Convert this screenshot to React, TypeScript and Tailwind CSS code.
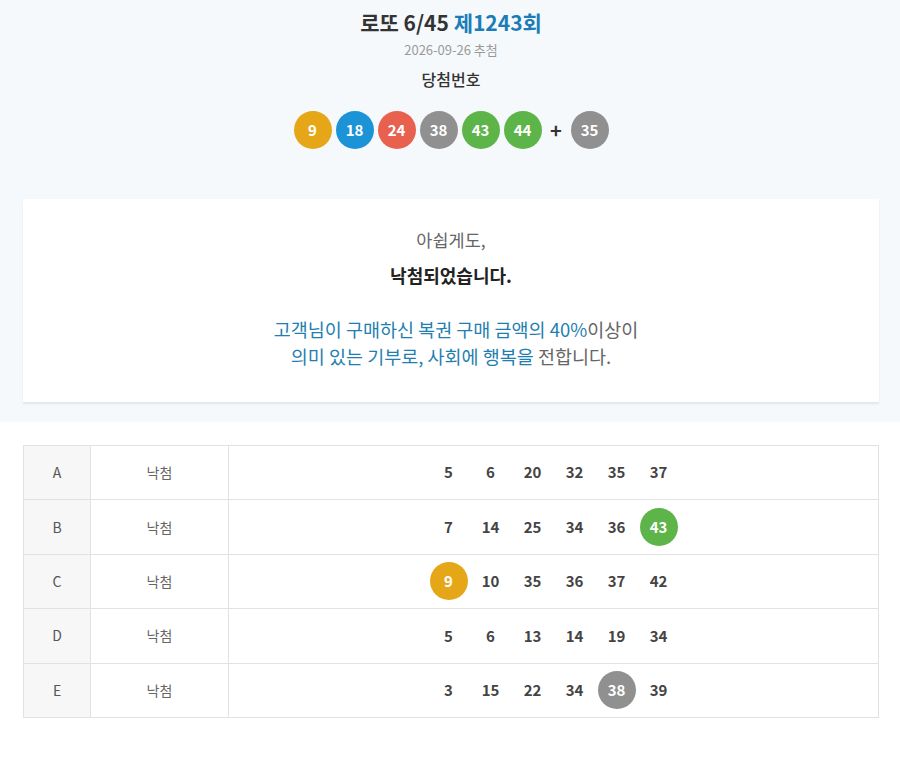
const balls = [
  { n: 9, c: 'bg-[#e5a718]' },
  { n: 18, c: 'bg-[#1d93d7]' },
  { n: 24, c: 'bg-[#e8614f]' },
  { n: 38, c: 'bg-[#909090]' },
  { n: 43, c: 'bg-[#5db449]' },
  { n: 44, c: 'bg-[#5db449]' },
]
const bonus = 35

const ballColor = (n: number) => {
  if (n <= 10) return 'bg-[#e5a718]'
  if (n <= 20) return 'bg-[#1d93d7]'
  if (n <= 30) return 'bg-[#e8614f]'
  if (n <= 40) return 'bg-[#909090]'
  return 'bg-[#5db449]'
}

const winning = balls.map(b => b.n)

const games = [
  { id: 'A', nums: [5, 6, 20, 32, 35, 37] },
  { id: 'B', nums: [7, 14, 25, 34, 36, 43] },
  { id: 'C', nums: [9, 10, 35, 36, 37, 42] },
  { id: 'D', nums: [5, 6, 13, 14, 19, 34] },
  { id: 'E', nums: [3, 15, 22, 34, 38, 39] },
]

function Ball({ n, color }: { n: number; color: string }) {
  return (
    <span className={`flex h-[38px] w-[38px] items-center justify-center rounded-full text-[15px] font-bold text-white ${color}`}>
      {n}
    </span>
  )
}

export default function App() {
  return (
    <div className="min-h-[759px] bg-white font-['Noto_Sans_CJK_KR','Noto_Sans',sans-serif]">
      <section className="bg-[#f6f9fc] pb-[20px] pl-[23px] pr-[21px] pt-[7px]">
        <h1 className="text-center text-[21px] font-bold leading-[30px] text-[#333]">
          로또 6/45 <span className="text-[#1a7db8]">제1243회</span>
        </h1>
        <p className="mt-[4px] text-center text-[13px] leading-[18px] text-[#999]">2026-09-26 추첨</p>
        <p className="mt-[8px] text-center text-[16px] font-medium leading-[24px] text-[#333]">당첨번호</p>
        <div className="mt-[20px] flex items-center justify-center gap-[4px]">
          {balls.map(b => <Ball key={b.n} n={b.n} color={b.c} />)}
          <span className="w-[21px] text-center text-[20px] font-bold leading-none text-[#333]">+</span>
          <Ball n={bonus} color="bg-[#909090]" />
        </div>
        <div className="mt-[50px] bg-white px-4 pb-[32px] pt-[28px] text-center shadow-[0_2px_2px_rgba(0,0,0,0.08)]">
          <p className="text-[17.5px] leading-[26px] text-[#666]">아쉽게도,</p>
          <p className="mt-[9px] text-[18px] font-bold leading-[26px] text-[#222]">낙첨되었습니다.</p>
          <div className="mt-[28px] text-[18.5px] leading-[27px] text-[#666]">
            <p className="pl-[10px]"><span className="text-[#1f7fb0]">고객님이 구매하신 복권 구매 금액의 40%</span>이상이</p>
            <p><span className="text-[#1f7fb0]">의미 있는 기부로, 사회에 행복을</span> 전합니다.</p>
          </div>
        </div>
      </section>
      <div className="pl-[23px] pr-[21px] pt-[23px]">
        <table className="w-full border-collapse border border-[#e2e2e2]">
          <tbody>
            {games.map(g => (
              <tr key={g.id} className="h-[54.4px]">
                <td className="w-[67px] border border-[#e2e2e2] bg-[#f7f7f7] text-center text-[14px] text-[#555]">{g.id}</td>
                <td className="w-[138px] border border-[#e2e2e2] text-center text-[14px] text-[#666]">낙첨</td>
                <td className="border border-[#e2e2e2]">
                  <div className="flex items-center justify-center gap-[4px]">
                    {g.nums.map(n =>
                      winning.includes(n) ? (
                        <Ball key={n} n={n} color={ballColor(n)} />
                      ) : (
                        <span key={n} className="flex h-[38px] w-[38px] items-center justify-center text-[15px] font-bold text-[#444]">
                          {n}
                        </span>
                      )
                    )}
                  </div>
                </td>
              </tr>
            ))}
          </tbody>
        </table>
      </div>
    </div>
  )
}
